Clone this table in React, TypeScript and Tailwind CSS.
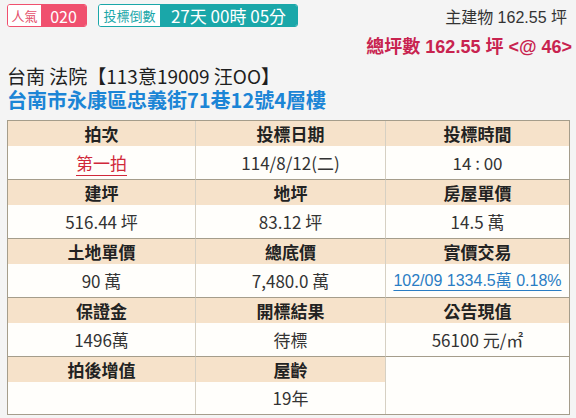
import React from 'react';

type Cell = { label: string; value?: React.ReactNode };

const groups: Cell[][] = [
  [
    { label: '拍次', value: <span className="text-[#d0283a] underline underline-offset-[5px] decoration-[1px]">第一拍</span> },
    { label: '投標日期', value: '114/8/12(二)' },
    { label: '投標時間', value: '14 : 00' },
  ],
  [
    { label: '建坪', value: '516.44 坪' },
    { label: '地坪', value: '83.12 坪' },
    { label: '房屋單價', value: '14.5 萬' },
  ],
  [
    { label: '土地單價', value: '90 萬' },
    { label: '總底價', value: '7,480.0 萬' },
    {
      label: '實價交易',
      value: (
        <span className="text-[#2a7dc4] underline underline-offset-[4px] decoration-[1px] text-[16px] whitespace-nowrap font-['Liberation_Sans','Noto_Sans_CJK_TC',sans-serif]">
          102/09 1334.5萬 0.18%
        </span>
      ),
    },
  ],
  [
    { label: '保證金', value: '1496萬' },
    { label: '開標結果', value: '待標' },
    { label: '公告現值', value: '56100 元/㎡' },
  ],
];

const head = 'h-[25px] bg-[#f6e2ca] flex items-center justify-center text-[17px] font-bold text-[#222]';
const cell = 'bg-[#fffefb] flex items-center justify-center text-[17px] text-[#333]';

const App: React.FC = () => {
  return (
    <div className="w-[576px] h-[418px] bg-[#f4f4f4] overflow-hidden font-['Noto_Sans_CJK_TC',sans-serif] text-[#333]">
      <div className="flex justify-between pl-[7px] pr-[4px] pt-[4px]">
        <div className="flex items-start gap-[11px]">
          <div className="flex h-[23px] rounded-[3px] border border-[#f0506e] overflow-hidden">
            <span className="w-[33px] bg-white text-[#e4506c] text-[13px] flex items-center justify-center">人氣</span>
            <span className="w-[45px] bg-[#f0506e] text-white text-[16px] flex items-center justify-center">020</span>
          </div>
          <div className="flex h-[23px] rounded-[3px] border border-[#1aa7a9] overflow-hidden">
            <span className="w-[61px] bg-white text-[#1aa7a9] text-[13px] flex items-center justify-center">投標倒數</span>
            <span className="w-[137px] bg-[#1aa7a9] text-white text-[17px] flex items-center justify-center whitespace-nowrap">
              27天 00時 05分
            </span>
          </div>
        </div>
        <div className="flex flex-col items-end font-['Liberation_Sans','Noto_Sans_CJK_TC',sans-serif]">
          <div className="text-[16px] leading-[18px] mt-[5px] mr-[5px] text-[#333]">主建物 162.55 坪</div>
          <div className="text-[18px] leading-[20px] mt-[10px] font-bold text-[#c8234f]">總坪數 162.55 坪 &lt;@ 46&gt;</div>
        </div>
      </div>

      <div className="px-[7px] mt-[7px] flex flex-col gap-[1px]">
        <div className="text-[19px] leading-[23px] text-[#1e1e1e]">台南 法院【113意19009 汪OO】</div>
        <div className="text-[20px] leading-[24px] font-bold text-[#1c85d6]">台南市永康區忠義街71巷12號4層樓</div>
      </div>

      <div className="ml-[7px] mt-[8px] w-[563px] border border-[#a59d8b] grid grid-cols-[188px_190px_1fr]">
        {groups.map((g, gi) => (
          <React.Fragment key={gi}>
            {g.map((c, ci) => (
              <div key={'h' + ci} className={`${head} ${ci < 2 ? 'border-r border-[#d6d0c3]' : ''}`}>
                {c.label}
              </div>
            ))}
            {g.map((c, ci) => (
              <div
                key={'v' + ci}
                className={`${cell} h-[34px] border-b border-[#a59d8b] ${ci < 2 ? 'border-r border-r-[#d6d0c3]' : ''}`}
              >
                {c.value}
              </div>
            ))}
          </React.Fragment>
        ))}
        <div className={`${head} border-r border-[#d6d0c3]`}>拍後增值</div>
        <div className={`${head} border-r border-[#d6d0c3]`}>屋齡</div>
        <div className="row-span-2 bg-[#fffefb]"></div>
        <div className={`${cell} h-[32px] border-r border-[#d6d0c3]`}></div>
        <div className={`${cell} h-[32px] border-r border-[#d6d0c3]`}>19年</div>
      </div>
    </div>
  );
};

export default App;
